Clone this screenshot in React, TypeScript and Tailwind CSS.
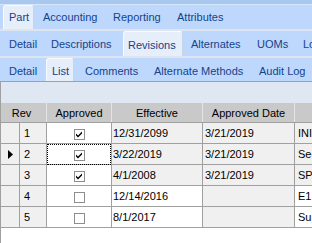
import React from "react";

type Tab = { label: string; cls: string; active?: boolean };

const row1: Tab[] = [
  { label: "Part", cls: "ml-[3px] w-[31px] pl-[5px]", active: true },
  { label: "Accounting", cls: "w-[71px] pl-[9px]" },
  { label: "Reporting", cls: "w-[64px] pl-[8px]" },
  { label: "Attributes", cls: "pl-[8px]" },
];

const row2: Tab[] = [
  { label: "Detail", cls: "w-[43px] pl-[9px]" },
  { label: "Descriptions", cls: "w-[80px] pl-[8px]" },
  { label: "Revisions", cls: "w-[60px] pl-[4px]", active: true },
  { label: "Alternates", cls: "w-[66px] pl-[8px]" },
  { label: "UOMs", cls: "w-[46px] pl-[8px]" },
  { label: "Locations", cls: "pl-[8px]" },
];

const row3: Tab[] = [
  { label: "Detail", cls: "w-[46px] pl-[9px]" },
  { label: "List", cls: "w-[28px] pl-[5px]", active: true },
  { label: "Comments", cls: "w-[73px] pl-[11px]" },
  { label: "Alternate Methods", cls: "w-[104px] pl-[7px]" },
  { label: "Audit Log", cls: "pl-[8px]" },
];

function TabRow({ tabs, rowCls, textCls }: { tabs: Tab[]; rowCls: string; textCls: string }) {
  return (
    <div className={`flex items-stretch overflow-hidden bg-[#bdd8fc] ${rowCls}`}>
      {tabs.map((t) => (
        <div
          key={t.label}
          className={`flex shrink-0 items-center whitespace-nowrap text-[11px] text-[#15428b] ${textCls} ${t.cls} ${
            t.active
              ? "rounded-t-[3px] border-l border-r border-t border-l-[#f7faff] border-t-[#f7faff] border-r-[#c6d4e8] bg-[#e6eefa]"
              : ""
          }`}
        >
          {t.label}
        </div>
      ))}
    </div>
  );
}

type Row = {
  rev: string;
  approved: boolean;
  eff: string;
  ad: string;
  desc: string;
  locked: boolean;
  current?: boolean;
};

const rows: Row[] = [
  { rev: "1", approved: true, eff: "12/31/2099", ad: "3/21/2019", desc: "INITIAL RELEASE", locked: true },
  { rev: "2", approved: true, eff: "3/22/2019", ad: "3/21/2019", desc: "Second revision", locked: true, current: true },
  { rev: "3", approved: true, eff: "4/1/2008", ad: "3/21/2019", desc: "SPEC UPDATE", locked: true },
  { rev: "4", approved: false, eff: "12/14/2016", ad: "", desc: "E1 change", locked: false },
  { rev: "5", approved: false, eff: "8/1/2017", ad: "", desc: "Superseded", locked: false },
];

function Checkbox({ checked }: { checked: boolean }) {
  return (
    <span className="flex h-[11px] w-[11px] items-center justify-center border border-[#8e8e8e] bg-white">
      {checked && (
        <svg width="9" height="9" viewBox="0 0 9 9">
          <polygon points="1,3.5 3,5.5 7,1.5 7,3.5 3,7.5 1,5.5" fill="#000" />
        </svg>
      )}
    </span>
  );
}

export default function App() {
  return (
    <div className="flex h-[243px] w-[312px] flex-col overflow-hidden bg-white font-['Liberation_Sans',Arial,sans-serif]">
      <div className="h-[4px] bg-[#a8c8f0]" />
      <div className="h-[1px] bg-[#d6e6fb]" />
      <TabRow tabs={row1} rowCls="h-[24px]" textCls="" />
      <div className="h-[2px] bg-[#dfe5ee]" />
      <TabRow tabs={row2} rowCls="h-[25px]" textCls="pt-[2px]" />
      <div className="h-[2px] bg-[#dfe5ee]" />
      <TabRow tabs={row3} rowCls="h-[23px]" textCls="pt-[3px]" />

      <div className="flex flex-1 flex-col border-l border-t border-[#a0a0a0] text-[11px] text-black">
        <div className="h-[21px] bg-[#dfe7f2]" />
        {/* header */}
        <div className="flex h-[20px] border-b border-[#a0a0a0] bg-[#c9c9c9]">
          <div className="flex w-[46px] items-center justify-center border-r border-[#e4e4e4] pr-[4px] pt-[2px]">Rev</div>
          <div className="flex w-[65px] items-center justify-center border-r border-[#e4e4e4] pt-[2px]">Approved</div>
          <div className="flex w-[91px] items-center justify-center border-r border-[#e4e4e4] pt-[2px]">Effective</div>
          <div className="flex w-[92px] items-center justify-center border-r border-[#e4e4e4] pt-[2px]">Approved Date</div>
          <div className="flex-1" />
        </div>
        {rows.map((r) => (
          <div key={r.rev} className="flex h-[21px] border-b border-[#a0a0a0]">
            <div className="flex w-[19px] items-center justify-center border-r border-[#a0a0a0] bg-[#f0f0f0]">
              {r.current && (
                <svg width="5" height="9" viewBox="0 0 5 9">
                  <polygon points="0,0 5,4.5 0,9" fill="#000" />
                </svg>
              )}
            </div>
            <div className="flex w-[27px] items-center border-r border-[#a0a0a0] bg-[#f0f0f0] pl-[4px]">{r.rev}</div>
            <div className="relative flex w-[65px] items-start justify-center border-r border-[#a0a0a0] bg-white pt-[6px]">
              <Checkbox checked={r.approved} />
              {r.current && (
                <div className="absolute bottom-[-1px] left-0 right-0 top-0 border border-dotted border-black" />
              )}
            </div>
            <div
              className={`flex w-[91px] items-center border-r border-[#a0a0a0] pl-[1px] ${
                r.locked ? "bg-[#f0f0f0]" : "bg-white"
              }`}
            >
              {r.eff}
            </div>
            <div className="flex w-[92px] items-center border-r border-[#a0a0a0] bg-[#f0f0f0] pl-[2px]">{r.ad}</div>
            <div
              className={`flex flex-1 items-center overflow-hidden whitespace-nowrap pl-[3px] ${
                r.locked ? "bg-[#f0f0f0]" : "bg-white"
              }`}
            >
              {r.desc}
            </div>
          </div>
        ))}
        <div className="flex-1 bg-white" />
      </div>
    </div>
  );
}
